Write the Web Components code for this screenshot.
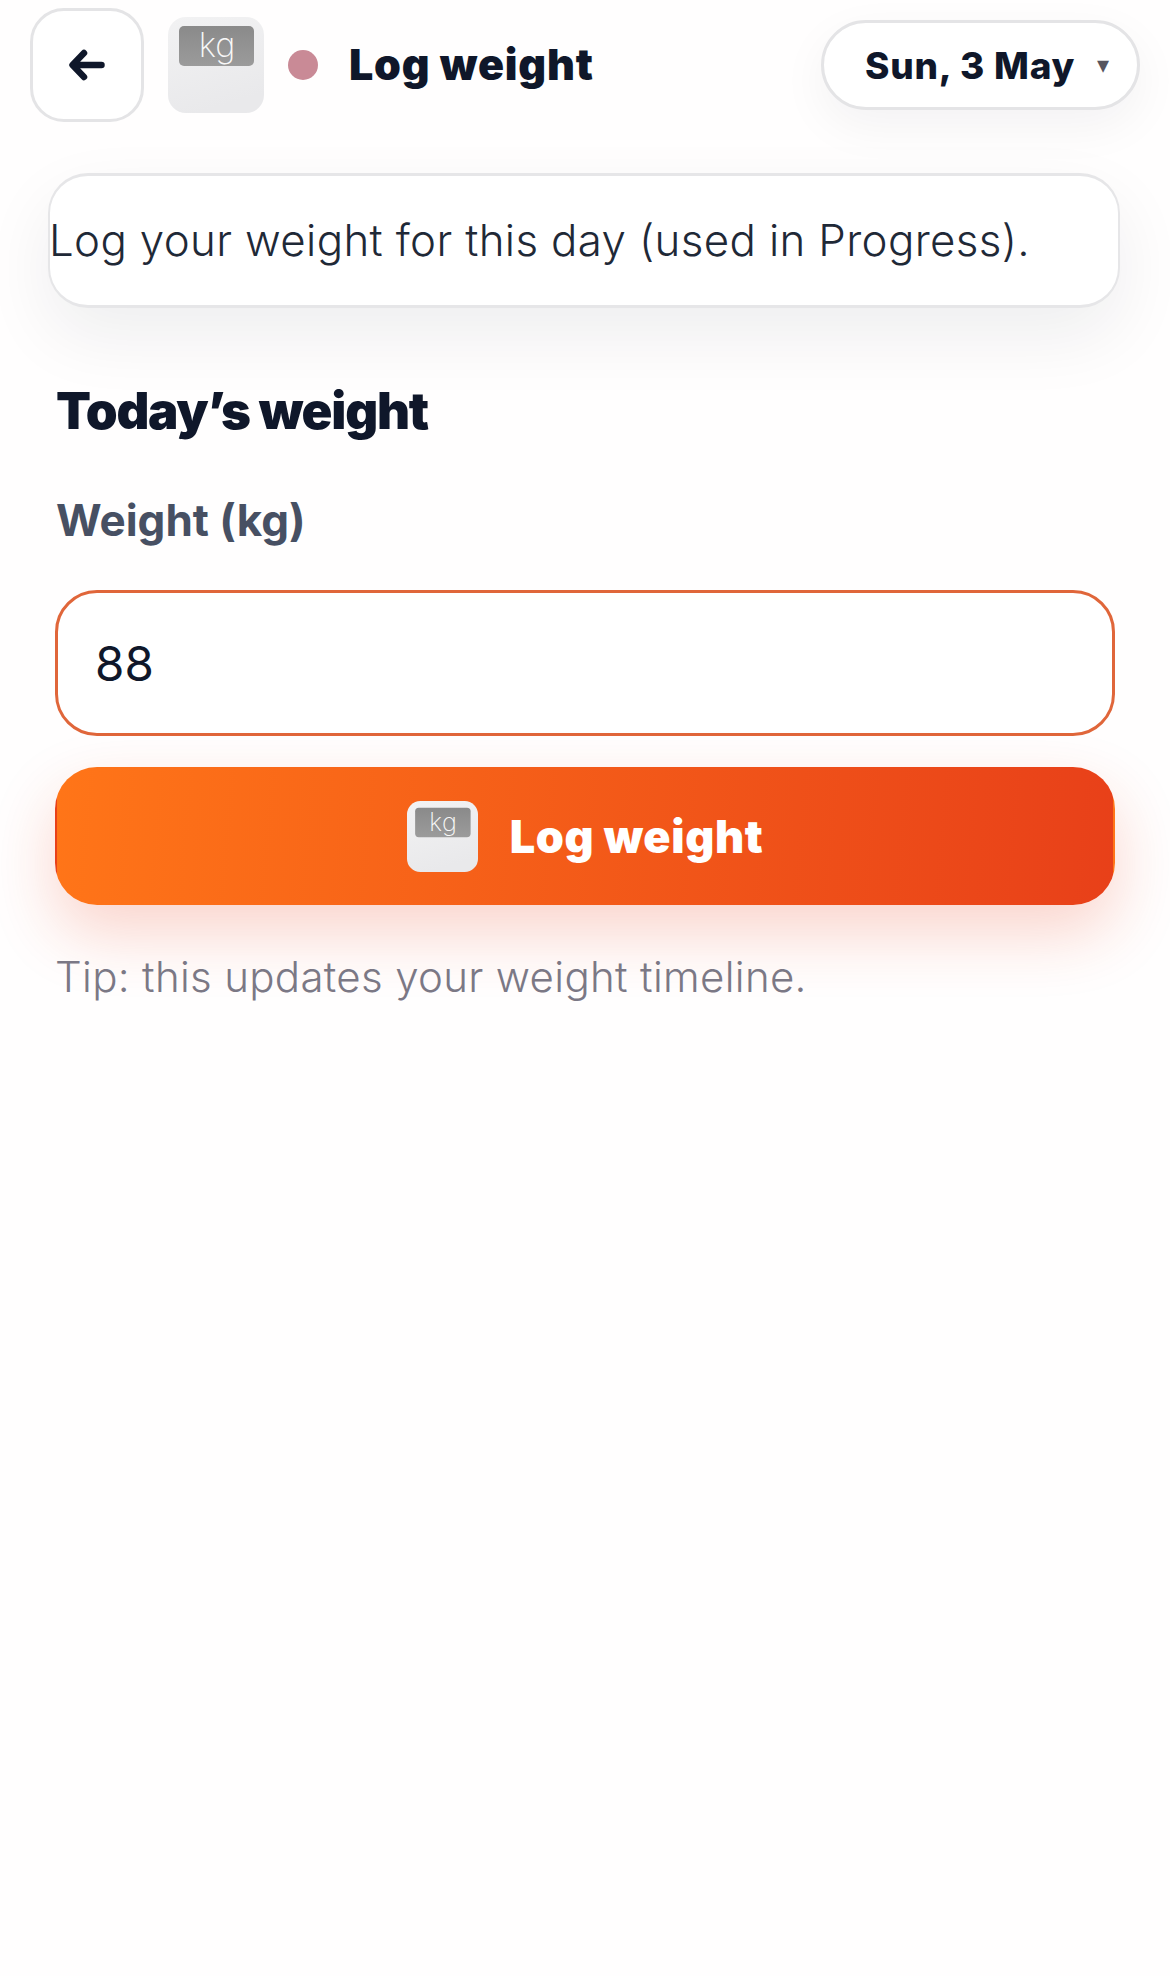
<!DOCTYPE html>
<html lang="en">
<head>
<meta charset="utf-8">
<title>Log weight</title>
<style>
  html, body { margin: 0; background: #fffefe; }
  body { font-family: Inter, "Liberation Sans", sans-serif; color: #0f172a; }
</style>
</head>
<body>
<log-weight-page>
  <top-bar slot="top">
    <back-button slot="back"></back-button>
    <scale-icon slot="icon" size="96"></scale-icon>
    <span slot="title">Log weight</span>
    <date-pill slot="date">Sun, 3 May</date-pill>
  </top-bar>
  <info-card slot="info">Log your weight for this day (used in Progress).</info-card>
  <weight-form slot="form" heading="Today’s weight" label="Weight (kg)" value="88" action="Log weight" tip="Tip: this updates your weight timeline."></weight-form>
</log-weight-page>

<script>
class LogWeightPage extends HTMLElement {
  constructor() {
    super();
    this.attachShadow({ mode: "open" });
    this.shadowRoot.innerHTML = `
      <style>
        :host { display: block; min-height: 1976px; box-sizing: border-box; padding-top: 8px; }
        .info { display: block; margin: 51px 50px 0 48px; }
        .form { display: block; margin-top: 78px; }
      </style>
      <slot name="top"></slot>
      <div class="info"><slot name="info"></slot></div>
      <div class="form"><slot name="form"></slot></div>
    `;
  }
}

class TopBar extends HTMLElement {
  constructor() {
    super();
    this.attachShadow({ mode: "open" });
    this.shadowRoot.innerHTML = `
      <style>
        :host { display: flex; align-items: center; padding: 0 30px; height: 114px; }
        .dot { width: 30px; height: 30px; border-radius: 50%; background: #c98a96; margin: 0 31px 0 24px; flex: none; }
        .title { margin-top: -2px; font-size: 43px; font-weight: 900; letter-spacing: 0.8px; color: #0f172a; white-space: nowrap; }
        .date { margin-left: auto; }
        .icon { margin-left: 24px; display: flex; }
      </style>
      <slot name="back"></slot>
      <div class="icon"><slot name="icon"></slot></div>
      <div class="dot"></div>
      <div class="title"><slot name="title"></slot></div>
      <div class="date"><slot name="date"></slot></div>
    `;
  }
}

class BackButton extends HTMLElement {
  constructor() {
    super();
    this.attachShadow({ mode: "open" });
    this.shadowRoot.innerHTML = `
      <style>
        :host {
          display: flex; align-items: center; justify-content: center;
          width: 114px; height: 114px; box-sizing: border-box;
          border: 3px solid #e4e4e6; border-radius: 34px; background: #fff;
        }
        svg { display: block; }
      </style>
      <svg width="36" height="32" viewBox="0 0 36 32" fill="none" stroke="#0f172a" stroke-width="6.5" stroke-linecap="round" stroke-linejoin="round">
        <path d="M32.5 16H4M15 4 3.5 16 15 28"/>
      </svg>
    `;
  }
}

class ScaleIcon extends HTMLElement {
  constructor() {
    super();
    this.attachShadow({ mode: "open" });
    const size = this.getAttribute("size") || 96;
    this.shadowRoot.innerHTML = `
      <style>
        :host { display: block; flex: none; }
        svg { display: block; }
        text { font-family: Inter, "Liberation Sans", sans-serif; font-weight: 200; }
      </style>
      <svg width="${size}" height="${size}" viewBox="0 0 96 96">
        <defs>
          <linearGradient id="body" x1="0" y1="0" x2="0.3" y2="1">
            <stop offset="0" stop-color="#f2f2f3"/>
            <stop offset="1" stop-color="#e9e9eb"/>
          </linearGradient>
          <linearGradient id="lcd" x1="0" y1="0" x2="0" y2="1">
            <stop offset="0" stop-color="#8a8a8a"/>
            <stop offset="1" stop-color="#9b9b9b"/>
          </linearGradient>
        </defs>
        <rect width="96" height="96" rx="18" fill="url(#body)"/>
        <rect x="11" y="9" width="75" height="40" rx="5" fill="url(#lcd)"/>
        <text x="49" y="40" font-size="34" text-anchor="middle" fill="#f8f8f8">kg</text>
      </svg>
    `;
  }
}

class DatePill extends HTMLElement {
  constructor() {
    super();
    this.attachShadow({ mode: "open" });
    this.shadowRoot.innerHTML = `
      <style>
        :host {
          display: flex; align-items: center; box-sizing: border-box;
          width: 319px; height: 90px; padding: 0 28px 0 41px;
          border: 3px solid #e4e4e6; border-radius: 45px; background: #fff;
          box-shadow: 0 16px 48px rgba(15, 23, 42, 0.05);
        }
        .label { font-size: 37px; font-weight: 800; letter-spacing: 0.8px; color: #0f172a; white-space: nowrap; }
        .caret { margin-left: auto; font-family: "DejaVu Sans", sans-serif; font-size: 24px; color: #55555f; }
      </style>
      <span class="label"><slot></slot></span>
      <span class="caret">▾</span>
    `;
  }
}

class InfoCard extends HTMLElement {
  constructor() {
    super();
    this.attachShadow({ mode: "open" });
    this.shadowRoot.innerHTML = `
      <style>
        :host {
          display: flex; align-items: center; box-sizing: border-box; height: 135px;
          border: 3px solid #e6e6e8; border-width: 3px 2px; border-radius: 40px; background: #fff;
          box-shadow: 0 28px 70px rgba(15, 23, 42, 0.07);
          font-size: 43.8px; font-weight: 350; letter-spacing: 0.37px; color: #1f2937; white-space: nowrap;
        }
        span { margin-left: -1px; }
      </style>
      <span><slot></slot></span>
    `;
  }
}

class WeightForm extends HTMLElement {
  constructor() {
    super();
    this.attachShadow({ mode: "open" });
    const attr = (name) => this.getAttribute(name) || "";
    this.shadowRoot.innerHTML = `
      <style>
        :host { display: block; padding: 0 55px; }
        h2 { margin: 0 0 0 1px; font-size: 51px; line-height: 50px; font-weight: 900; letter-spacing: -1.25px; color: #0f172a; }
        .label { margin: 59px 0 0 1px; font-size: 44px; line-height: 50px; font-weight: 700; color: #475063; }
        .field {
          display: flex; align-items: center; box-sizing: border-box;
          margin-top: 45px; height: 146px; padding: 0 37px;
          border: 3px solid #e0663a; border-radius: 42px; background: #fff;
          font-size: 47.5px; color: #0f172a;
        }
        .action {
          display: flex; align-items: center; justify-content: center; gap: 32px;
          box-sizing: border-box; margin-top: 31px; height: 138px;
          border: 2px solid transparent; border-radius: 42px;
          background: linear-gradient(95deg, #ff7518, #e84019);
          box-shadow: 0 28px 64px rgba(232, 64, 26, 0.22);
          font-size: 45px; font-weight: 900; letter-spacing: 0.6px; color: #fff;
        }
        .tip { margin: 47px 0 0 0; font-size: 42px; line-height: 50px; font-weight: 350; letter-spacing: 0.32px; color: #7b7885; }
      </style>
      <h2>${attr("heading")}</h2>
      <div class="label">${attr("label")}</div>
      <div class="field">${attr("value")}</div>
      <div class="action"><scale-icon size="71"></scale-icon><span>${attr("action")}</span></div>
      <div class="tip">${attr("tip")}</div>
    `;
  }
}

customElements.define("log-weight-page", LogWeightPage);
customElements.define("top-bar", TopBar);
customElements.define("back-button", BackButton);
customElements.define("scale-icon", ScaleIcon);
customElements.define("date-pill", DatePill);
customElements.define("info-card", InfoCard);
customElements.define("weight-form", WeightForm);
</script>
</body>
</html>
